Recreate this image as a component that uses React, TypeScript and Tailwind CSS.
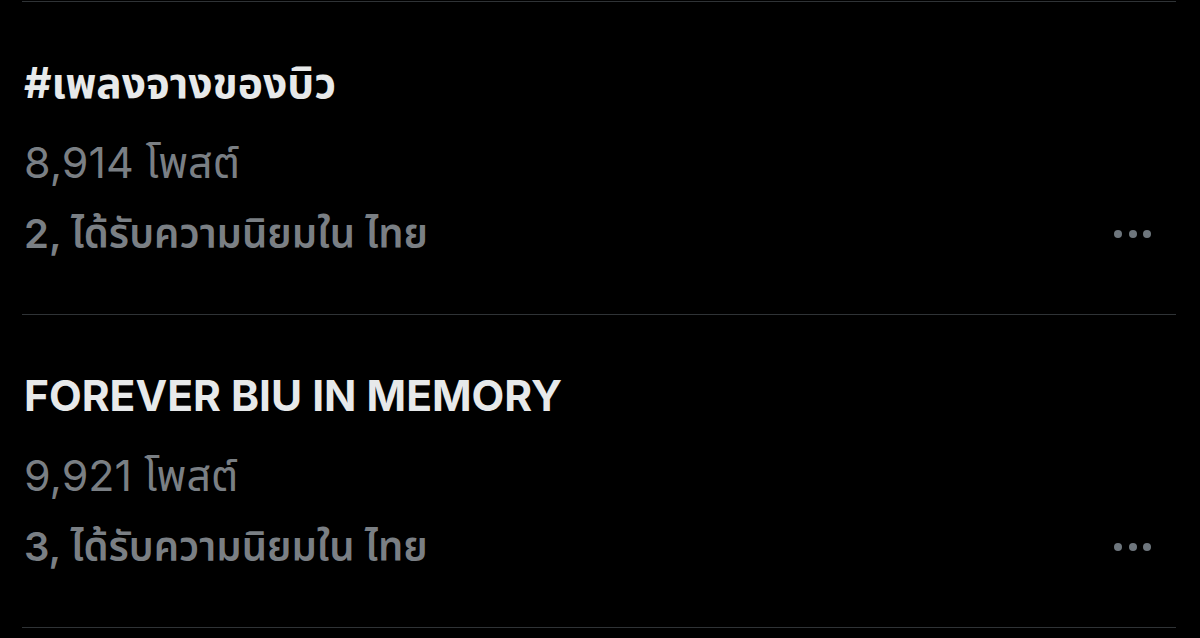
import React from "react";

type Trend = {
  title: string;
  posts: string;
  rank: number;
};

const trends: Trend[] = [
  { title: "#เพลงจางของบิว", posts: "8,914 โพสต์", rank: 2 },
  { title: "FOREVER BIU IN MEMORY", posts: "9,921 โพสต์", rank: 3 },
];

const font = { fontFamily: '"Inter", "Noto Sans", "Noto Sans Thai", sans-serif' };

function MoreDots() {
  return (
    <div className="flex items-center gap-[6.5px]">
      <span className="block h-[8px] w-[8px] rounded-full bg-[#6e767d]" />
      <span className="block h-[8px] w-[8px] rounded-full bg-[#6e767d]" />
      <span className="block h-[8px] w-[8px] rounded-full bg-[#6e767d]" />
    </div>
  );
}

function TrendItem({ trend }: { trend: Trend }) {
  return (
    <div className="relative flex h-[312px] flex-col pl-[2px] pt-[57px]">
      <div className="h-[48px] text-[42.5px] font-bold leading-[48px] text-[#e7e9ea]">
        {trend.title}
      </div>
      <div className="mt-[31px] h-[48px] text-[43px] font-normal leading-[48px] text-[#7a7f84]">
        {trend.posts}
      </div>
      <div className="mt-[24px] flex h-[48px] items-center justify-between pr-[25px]">
        <span className="text-[40px] font-semibold leading-[48px] text-[#7a7f84]">
          {trend.rank}, ได้รับความนิยมใน ไทย
        </span>
        <MoreDots />
      </div>
    </div>
  );
}

export default function App() {
  return (
    <div className="h-[638px] w-[1200px] overflow-hidden bg-black" style={font}>
      <div className="ml-[22px] mr-[24px] pt-[1px]">
        <div className="h-px bg-[#2f3336]" />
        {trends.map((t) => (
          <div key={t.title}>
            <TrendItem trend={t} />
            <div className="h-px bg-[#2f3336]" />
          </div>
        ))}
      </div>
    </div>
  );
}
